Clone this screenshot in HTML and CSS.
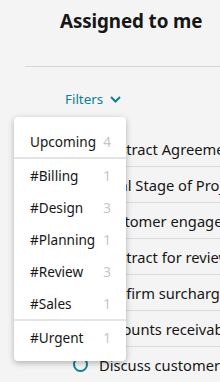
FILE: index.html
```html
<!DOCTYPE html>
<html lang="en">
<head>
<meta charset="utf-8">
<title>Assigned to me</title>
<link rel="stylesheet" href="styles.css">
</head>
<body>
<div class="page">
  <header class="header">
    <h1 class="title">Assigned to me</h1>
  </header>
  <div class="toolbar">
    <button class="filters" type="button">Filters
      <svg class="chev" width="11" height="7" viewBox="0 0 11 7"><path d="M1 1 L5.5 5.5 L10 1" fill="none" stroke="currentColor" stroke-width="2"/></svg>
    </button>
  </div>
  <ul class="tasks">
    <li class="task"><span class="check"></span><span class="task-text">Contract Agreement</span></li>
    <li class="task"><span class="check"></span><span class="task-text">Final Stage of Project</span></li>
    <li class="task"><span class="check"></span><span class="task-text">Customer engagement</span></li>
    <li class="task"><span class="check"></span><span class="task-text">Contract for review</span></li>
    <li class="task"><span class="check"></span><span class="task-text">Confirm surcharge</span></li>
    <li class="task"><span class="check"></span><span class="task-text">Accounts receivable</span></li>
    <li class="task"><span class="check"></span><span class="task-text">Discuss customer</span></li>
  </ul>
  <div class="menu">
    <div class="menu-group">
      <div class="menu-item"><span>Upcoming</span><span class="count">4</span></div>
    </div>
    <div class="menu-group">
      <div class="menu-item"><span>#Billing</span><span class="count">1</span></div>
      <div class="menu-item"><span>#Design</span><span class="count">3</span></div>
      <div class="menu-item"><span>#Planning</span><span class="count">1</span></div>
      <div class="menu-item"><span>#Review</span><span class="count">3</span></div>
      <div class="menu-item"><span>#Sales</span><span class="count">1</span></div>
    </div>
    <div class="menu-group">
      <div class="menu-item"><span>#Urgent</span><span class="count">1</span></div>
    </div>
  </div>
</div>
</body>
</html>
```
FILE: styles.css
```css
html, body {
  margin: 0;
  padding: 0;
  background: #f4f4f4;
  overflow: hidden;
}
body {
  font-family: "Noto Sans", "Liberation Sans", sans-serif;
  color: #161616;
}
.page {
  position: relative;
  width: 220px;
  height: 382px;
  padding-left: 25px;
  box-sizing: border-box;
  overflow: hidden;
}
.header {
  height: 66px;
  border-bottom: 1px solid #d6d6d6;
  padding-left: 35px;
}
.title {
  margin: 0;
  padding-top: 7px;
  font-size: 18.8px;
  line-height: 28px;
  font-weight: 700;
  white-space: nowrap;
  letter-spacing: -0.1px;
}
.toolbar {
  height: 64px;
  padding-left: 40px;
  display: flex;
  align-items: flex-start;
  box-sizing: border-box;
  padding-top: 22px;
}
.filters {
  display: flex;
  align-items: center;
  gap: 7px;
  border: 0;
  background: none;
  padding: 0;
  font-family: inherit;
  font-size: 13.4px;
  line-height: 20px;
  color: #0f7f95;
}
.chev { display: block; margin-top: 1px; }
.tasks {
  list-style: none;
  margin: 0;
  padding: 0;
}
.task {
  height: 36px;
  border-bottom: 1px solid #dcdcdc;
  box-sizing: border-box;
  display: flex;
  align-items: center;
  padding-left: 48px;
  gap: 11px;
  white-space: nowrap;
  overflow: hidden;
  font-size: 14.7px;
}
.task-text {
  overflow: hidden;
  min-width: 0;
}
.check {
  width: 11px;
  height: 11px;
  border: 2px solid #137f90;
  border-radius: 50%;
  flex: none;
}
.menu {
  position: absolute;
  left: 14px;
  top: 117px;
  width: 112px;
  background: #ffffff;
  border-radius: 4px;
  box-shadow: 0 2px 6px rgba(0, 0, 0, 0.28);
  padding: 8px 0;
}
.menu-group + .menu-group {
  border-top: 2px solid #e4e4e4;
}
.menu-item {
  height: 32px;
  display: flex;
  align-items: center;
  justify-content: space-between;
  padding: 0 15px 0 16px;
  font-size: 13.6px;
}
.count {
  color: #c6c6c6;
}
```
